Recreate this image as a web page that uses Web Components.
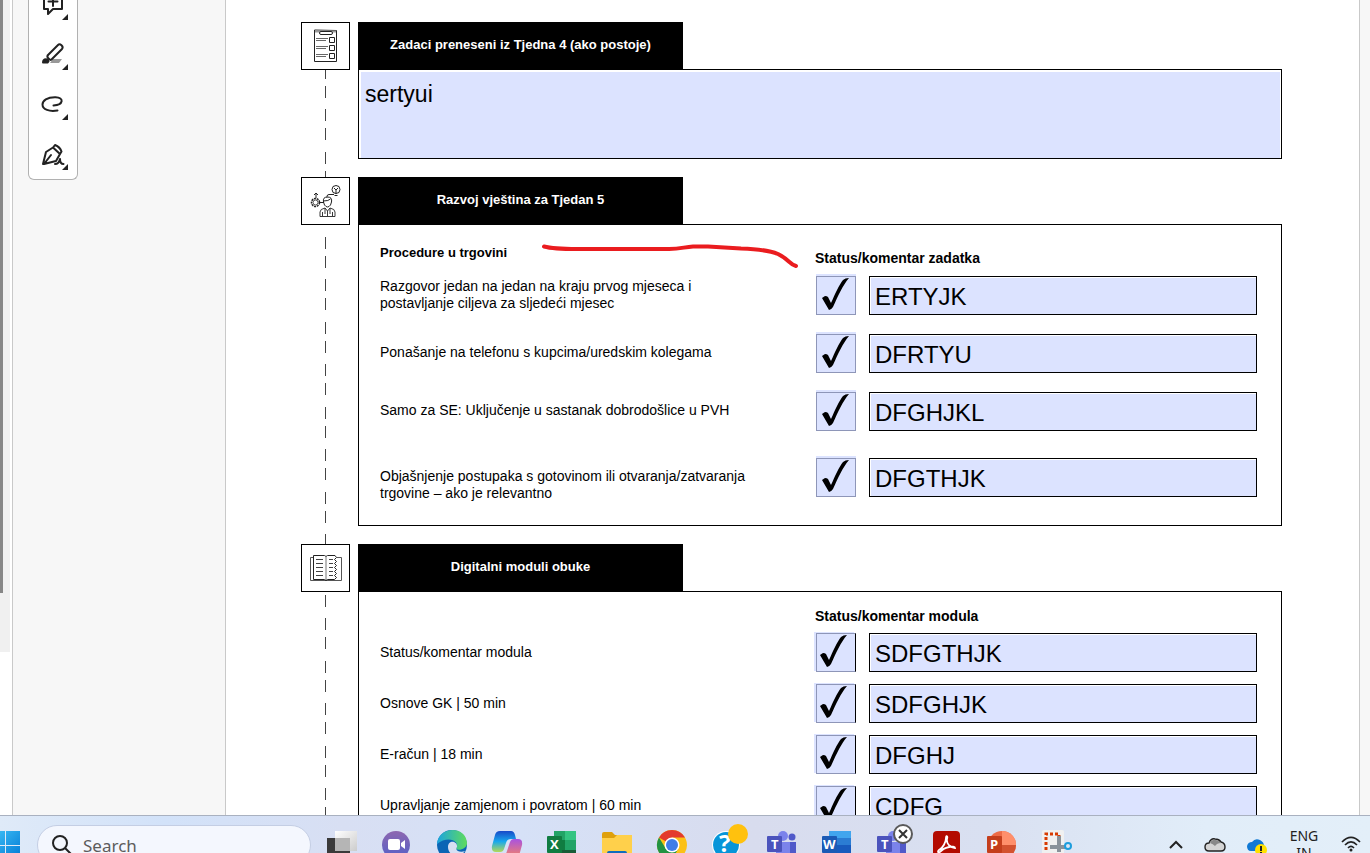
<!DOCTYPE html>
<html lang="hr">
<head>
<meta charset="utf-8">
<title>Plan obuke</title>
<style>
html,body{margin:0;height:100%;overflow:hidden;background:#fff;font-family:"Liberation Sans",Arial,sans-serif;color:#000}
</style>
</head>
<body>
<pdf-desktop>
  <tool-rail slot="tools"></tool-rail>
  <plan-section heading="Zadaci preneseni iz Tjedna 4 (ako postoje)" dash="-3px">
    <svg slot="icon" width="26" height="34" viewBox="0 0 26 34" fill="none" stroke="#222" aria-hidden="true">
      <path d="M1.500 1v31.500h22V1.500z"/><path d="M2 2.500h21" stroke="#999" stroke-width="2"/><rect x="6.500" y="2.500" width="13" height="3" rx="1.500" fill="#fff"/>
      <path d="M3 9.500h12M3 11.500h10M3 17.500h12M3 19.500h10M3 25.500h12M3 27.500h10" stroke="#666"/>
      <path d="M16.500 8.500h5v5h-5zM16.500 16.500h5v5h-5zM16.500 24.500h5v5h-5z"/>
    </svg>
    <note-area value="sertyui" label="Zadaci preneseni iz Tjedna 4"></note-area>
  </plan-section>
  <plan-section heading="Razvoj vještina za Tjedan 5" dash="12px">
    <svg slot="icon" width="34" height="34" viewBox="0 0 34 34" fill="none" stroke="#222" aria-hidden="true">
      <circle cx="6.500" cy="18.500" r="4" stroke-width="1.500" stroke-dasharray="2 .8"/><circle cx="6.500" cy="18.500" r="2.500" stroke-width=".8"/><path d="M7 14v-4M5 11l2-2 2 2M11 18.500h4"/>
      <circle cx="27" cy="5.500" r="4"/><path d="M25 4l2 2 2-2M27 6v4M25.500 11.500h3M25 10.500h-5q-2 0-2 2v1"/>
      <path d="M14.500 18q-1-5 4-5 5 0 4 5l-1 3q-3 4-6 0zM14.500 17q5 0 7-2" /><path d="M16 24q-5 1-5 4v4.500h15V28q0-3-5-4l-2.500 3zM18.500 27v5M16 24v6M21 24v6M13.500 28v4M23.500 28v4" stroke-width=".9"/>
    </svg>
    <task-list class="wide">
      <strong slot="left">Procedure u trgovini</strong>
      <span slot="right">Status/komentar zadatka</span>
      <task-row class="mid" label="Razgovor jedan na jedan na kraju prvog mjeseca i|postavljanje ciljeva za sljedeći mjesec" value="ERTYJK"></task-row>
      <task-row label="Ponašanje na telefonu s kupcima/uredskim kolegama" value="DFRTYU"></task-row>
      <task-row label="Samo za SE: Uključenje u sastanak dobrodošlice u PVH" value="DFGHJKL"></task-row>
      <task-row class="last" label="Objašnjenje postupaka s gotovinom ili otvaranja/zatvaranja|trgovine – ako je relevantno" value="DFGTHJK"></task-row>
    </task-list>
    <ink-stroke></ink-stroke>
  </plan-section>
  <plan-section heading="Digitalni moduli obuke" dash="-16px">
    <svg slot="icon" width="34" height="28" viewBox="0 0 34 28" fill="none" stroke="#222" aria-hidden="true">
      <path d="M4 3.500H1.500v23h31v-23H28" stroke="#555"/><path d="M4.500 1.500h11l1.500 1 1.500-1H26l1.500 2-2 2 2 2-2 2 2 2-2 2 2 2-2 2 2 2-2 2 2 2-2 2h-7l-1.500 1-1.500-1h-11z"/><path d="M17 2v24" stroke="#777"/>
      <path d="M7 5.500h7M7 9.500h7M7 13.500h7M7 17.500h7M7 21.500h7M20 5.500h4M20 9.500h4M20 13.500h4M20 17.500h4M20 21.500h4" stroke="#444"/>
    </svg>
    <task-list class="tight">
      <span slot="right">Status/komentar modula</span>
      <task-row class="edge" label="Status/komentar modula" value="SDFGTHJK"></task-row>
      <task-row class="edge" label="Osnove GK | 50 min" value="SDFGHJK"></task-row>
      <task-row class="edge" label="E-račun | 18 min" value="DFGHJ"></task-row>
      <task-row class="edge" label="Upravljanje zamjenom i povratom | 60 min" value="CDFG"></task-row>
    </task-list>
  </plan-section>
  <task-bar slot="taskbar"></task-bar>
</pdf-desktop>

<script>
class Part extends HTMLElement{
  connectedCallback(){
    if(this.shadowRoot) return;
    const t=document.createElement('template');
    t.innerHTML=`<style>:host,*{box-sizing:border-box}${this.css()}</style>${this.html()}`;
    this.attachShadow({mode:'open'}).append(t.content.cloneNode(true));
  }
  a(n){return this.getAttribute(n)||''}
}
customElements.define('pdf-desktop',class extends Part{
  css(){return `:host{display:flex;flex-direction:column;height:100vh}
  .main{flex:1;min-height:0;display:flex;overflow:hidden}
  .scroll{width:12px;flex:none;display:flex;flex-direction:column}
  .track{height:80%;width:10px;background:#f0f0f0}
  .thumb{height:91%;width:3px;background:#868686}
  aside{width:214px;flex:none;background:#f7f7f7;border:solid #c9c9c9;border-width:0 1px;padding-left:15px}
  .page{flex:1;min-width:0;padding:22px 77px 0 75px;background:#fff}
  .edge{width:11px;flex:none;border-left:1px solid #c9c9c9;background:#f7f7f7}`}
  html(){return `<div class="main"><div class="scroll"><div class="track"><div class="thumb"></div></div></div>
  <aside><slot name="tools"></slot></aside><main class="page"><slot></slot></main><div class="edge"></div></div><slot name="taskbar"></slot>`}
});
customElements.define('tool-rail',class extends Part{
  css(){return `:host{display:flex;flex-direction:column;width:50px;height:180px;background:#fff;border:1px solid #b1b1b1;border-top:0;border-radius:0 0 6px 6px;justify-content:flex-end}
  button{position:relative;height:50px;flex:none;border:0;background:none;padding:0;display:flex;align-items:center;justify-content:center}
  svg{display:block}.m{position:absolute;right:9px;bottom:9px}`}
  html(){
    const i={
      Komentar:'<path d="M4 3h18v15h-9l-5 5v-5H4z"/><path d="M13 6v9M8.500 10.500h9"/>',
      'Istakni':'<path d="M10 22h9l3-4h-9z" fill="#999" stroke="none"/><path d="M7.500 14.500L18 4q1.500-1.500 3.500.3t.5 3.700L11.500 18.500q-1 .8-2.200-.2l-1.500-1.500q-1-1 0-2z"/><path d="M3 21.500q0-3 3-3.200 2 0 2.500 2l-1 1.200z" fill="#222"/>',
      'Crtaj':'<path d="M13.500 14.500c10-.5 11-8 2-8.300C7 6 2.500 10 2.500 13.500c0 5 7 7.500 15 6"/>',
      'Potpis':'<path d="M3 23L6 11l7-4.500 7 6.500-4 7-12 3 7-9M13 6.500L15 4q5 2 6.500 6.500L20 13"/><path d="M15 23q4 0 5-5 0 5 3.500 5"/>'};
    return Object.keys(i).map(k=>`<button aria-label="${k}"><svg width="26" height="26" viewBox="0 0 26 26" fill="none" stroke="#222" stroke-width="2" stroke-linejoin="round" stroke-linecap="round">${i[k]}</svg><svg class="m" width="6" height="6"><path d="M6 0v6H0z" fill="#222"/></svg></button>`).join('')}
});
customElements.define('plan-section',class extends Part{
  css(){return `:host{display:grid;grid-template-columns:49px minmax(0,1fr);column-gap:8px}
  .rail{display:flex;flex-direction:column}
  .icon{height:48px;flex:none;border:1px solid #000;display:flex;align-items:center;justify-content:center}
  .line{flex:1;width:1px;margin-left:24px;background:repeating-linear-gradient(#444 0 12px,#fff 12px 19px,#444 19px 31px,#fff 31px 42px,#444 42px 54px,#fff 54px 61px,#444 61px 73px,#fff 73px 85px) 0 var(--dash)/1px 85px}
  .body{padding-bottom:18px;min-width:0}
  h2{margin:0;width:325px;height:47px;background:#000;color:#fff;font-size:13px;line-height:46px;text-align:center;font-weight:700}
  .panel{position:relative;border:1px solid #000}`}
  html(){return `<div class="rail" style="--dash:${this.a('dash')}"><div class="icon"><slot name="icon"></slot></div><div class="line"></div></div>
  <section class="body"><h2>${this.a('heading')}</h2><div class="panel"><slot></slot></div></section>`}
});
customElements.define('note-area',class extends Part{
  css(){return `:host{display:block;padding:2px 1px 0 2px}
  textarea{display:block;width:100%;height:86px;border:0;resize:none;background:#dce3ff;padding:9px 4px;font:23px/26px "Liberation Sans",Arial,sans-serif;color:#000;outline:0}`}
  html(){return `<textarea aria-label="${this.a('label')}">${this.a('value')}</textarea>`}
});
customElements.define('task-list',class extends Part{
  css(){return `:host{display:flex;flex-direction:column;gap:19px;padding:20px 24px 28px 21px}
  :host(.tight){gap:12px;padding-top:16px}
  header{display:grid;grid-template-columns:minmax(0,1fr) 442px;font-size:13px;line-height:16px;font-weight:700;margin-bottom:-9px}
  :host(.tight) header{margin-bottom:-3px}
  .r{padding-top:5px;font-size:14px}:host(.tight) .r{padding-top:0}`}
  html(){return `<header><div><slot name="left"></slot></div><div class="r"><slot name="right"></slot></div></header><slot></slot>`}
});
let n=0;
customElements.define('task-row',class extends Part{
  css(){return `:host{display:grid;grid-template-columns:minmax(0,1fr) 54px 388px;align-items:start;height:39px;font-size:14px;line-height:17px}
  :host(.last){margin-top:8px}
  label{padding-top:10px}
  :host(.mid) label{padding-top:2px}
  :host(.edge) label{padding-top:11px}
  .c{appearance:none;margin:0 0 0 1px;width:40px;height:39px;border:1px solid #8e96b8;background:#dce3ff;box-shadow:0 -2px 0 #dce3ff}
  :host(.edge) .c{border-right-color:#000;box-shadow:-2px -1px 0 #dce3ff}
  .c:checked::before{content:"";display:block;width:38px;height:38px;background:#000;clip-path:path("M5 21L8 19Q10 19 11 20L14 26C18 17 22 8 26 3Q28 1 32 1C26 8 21 19 16 30Q14 33 12 33Z")}
  :host(.edge) .c:checked::before{clip-path:path("M3 21L6 19Q8 19 9 20L12 26C16 17 20 8 24 3Q26 1 30 1C24 8 19 19 14 30Q12 33 10 33Z")}
  .t{width:388px;height:39px;border:1px solid #000;background:#dce3ff;box-shadow:inset 1px 1px 0 #fff;padding:2px 5px 0;font:24px "Liberation Sans",Arial,sans-serif;color:#000;outline:0}`}
  html(){const id='r'+(++n);return `<label for="${id}">${this.a('label').replace('|',this.a('label').includes(' | ')?'|':'<br>')}</label><input class="c" type="checkbox" id="${id}" checked><input class="t" type="text" aria-label="Komentar" value="${this.a('value')}">`}
});
customElements.define('ink-stroke',class extends Part{
  css(){return `:host{position:absolute;left:182px;top:17px;pointer-events:none}svg{display:block}`}
  html(){return `<svg width="260" height="30" viewBox="0 0 260 30" fill="none" stroke="#ea1c1f" stroke-width="4" stroke-linecap="round"><path d="M3 4.500C12 7 22 7 36 7H128C140 7 143 5 152 4.500H167L200 6.500C217 7 227 8 237 12C249 18 248 22 255 24"/></svg>`}
});
customElements.define('task-bar',class extends Part{
  css(){return `:host{display:block;height:38px;flex:none;overflow:hidden;border-top:1px solid #a9b1c0;background:linear-gradient(90deg,#dfeaf8,#d2e2f9 12%,#d8dff3 25%,#d6e1f7 38%,#d8dcee 55%,#d9e0f1 72%,#e1edf9 88%,#e3eff9)}
  .bar{display:flex;align-items:flex-start;height:48px;padding-top:14px}
  button{border:0;padding:0;background:none;display:block;flex:none;font:inherit;color:#222}
  svg{display:block;overflow:visible}
  .start{width:20px}
  .search{margin:-5px 16px 0 17px;width:274px;height:40px;flex:none;border:1px solid #c4cee4;border-radius:20px;background:#f4f7fe;display:flex;align-items:center;padding:0 14px;gap:13px}
  .search input{width:180px;border:0;background:none;padding:0;outline:0;font:17px "Noto Sans",sans-serif;color:#5c5c5c}
  .search input::placeholder{color:#5c5c5c;opacity:1}
  .apps{display:flex;gap:25px}.apps button{width:30px}
  .tray{margin:-7px 0 0 auto;display:flex;align-items:flex-start;gap:21px;padding-right:9px}
  .lang{font:14px/17px "Noto Sans",sans-serif;width:32px;text-align:center;padding-top:4px}
  text{font-family:"Open Sans",sans-serif;font-weight:700;fill:#fff;font-size:13px}`}
  html(){
    const app=(l,s)=>`<button aria-label="${l}"><svg width="30" height="30" viewBox="0 0 30 30">${s}</svg></button>`;
    const teams='<circle cx="16" cy="6" r="5" fill="#7b83eb"/><circle cx="25" cy="7" r="3.500" fill="#5059c9"/><path d="M20 12h9v12q-4 4-9 1z" fill="#5059c9"/><path d="M9 12h14v12q-6 8-14 1z" fill="#7b83eb"/><rect y="6" width="15" height="16" rx="1" fill="#4b53bc"/><text x="4" y="19">T</text>';
    return `<div class="bar">
    <button class="start" aria-label="Start"><svg width="20" height="32"><defs><linearGradient id="w" x2="1" y2="1"><stop stop-color="#43c4f8"/><stop offset="1" stop-color="#0078d4"/></linearGradient></defs><path d="M-10 1H5v14h-15zM6 1h14v14H6zM-10 16H5v14h-15zM6 16h14v14H6z" fill="url(#w)"/></svg></button>
    <div class="search"><svg width="18" height="20" fill="none" stroke="#222" stroke-width="2"><circle cx="8" cy="8" r="7"/><path d="M13 13l6 6"/></svg><input type="search" placeholder="Search" aria-label="Search"></div>
    <div class="apps">
    ${app('Task view','<defs><linearGradient id="tv" x2="1" y2="1"><stop stop-color="#fff"/><stop offset="1" stop-color="#ccc"/></linearGradient></defs><path d="M0 8h23v20H0z" fill="#3a3a3a"/><path d="M8 1h22v20H8z" fill="url(#tv)"/><path d="M8 8h15v13H8z" fill="#b5b5b5"/>')}
    ${app('Chat','<defs><linearGradient id="ch" x2="0" y2="1"><stop stop-color="#8d67b0"/><stop offset="1" stop-color="#5560c8"/></linearGradient></defs><circle cx="14" cy="15" r="14" fill="url(#ch)"/><rect x="6" y="9" width="12" height="11" rx="2" fill="#fff"/><path d="M19 13l4-3v9l-4-3z" fill="#fff"/>')}
    ${app('Edge','<defs><linearGradient id="e1"><stop stop-color="#1aa3e0"/><stop offset="1" stop-color="#5fdc5c"/></linearGradient></defs><circle cx="15" cy="15" r="15" fill="#0b65b5"/><path d="M0 14C1-4 29-5 30 13c0 6-8 8-11 6 5-8-8-14-19-5z" fill="url(#e1)"/><path d="M11 17c0-8 10-6 9 0-3 4 4 6 8 4-7 9-17 4-17-4z" fill="#d7dff2"/>')}
    ${app('Copilot','<defs><linearGradient id="c1" x2="0" y2="1"><stop stop-color="#1749c8"/><stop offset=".5" stop-color="#18a8ed"/><stop offset="1" stop-color="#b2d957"/></linearGradient><linearGradient id="c2" x2="0" y2="1"><stop stop-color="#a852e0"/><stop offset="1" stop-color="#ff8b56"/></linearGradient></defs><path d="M8 1h11q3 0 4 4l1 4h-5q-4 0-5 4l-2 6q-1 3-4 3H4q-5 0-4-6L3 5q1-4 5-4z" fill="url(#c1)"/><path d="M22 9h4q5 0 4 6l-3 11q-1 4-5 4H11q-4 0-5-5h5q3 0 4-4l3-9q1-3 4-3z" fill="url(#c2)"/>')}
    ${app('Excel','<path d="M7 1h22v28H7z" fill="#21a366"/><path d="M18 1h11v9H18z" fill="#33c481"/><path d="M7 10h11v10H7z" fill="#107c41"/><path d="M18 20h11v9H7v-9z" fill="#185c37"/><rect y="6" width="15" height="17" rx="1" fill="#107c41"/><text x="3" y="19">X</text>')}
    ${app('Files','<path d="M0 4q0-2 2-2h8l3 3h15q2 0 2 2v5H0z" fill="#dfa00c"/><path d="M0 8h12l3-3h15v22H0z" fill="#ffd04b"/><path d="M5 23q0-2 2-2h16q2 0 2 2v6H5z" fill="#0f6cbd"/>')}
    ${app('Chrome','<circle cx="15" cy="15" r="15" fill="#fbc116"/><path d="M15 15L2 7.500A15 15 0 0 1 28 7.500H15z" fill="#e33b2e"/><path d="M2 7.500A15 15 0 0 0 15 30l6-11H9z" fill="#229342"/><circle cx="15" cy="15" r="7.500" fill="#fff"/><circle cx="15" cy="15" r="6" fill="#3f7de8"/>')}
    ${app('Help','<circle cx="14" cy="15" r="14" fill="#fff"/><circle cx="14" cy="15" r="13" fill="#0795d9"/><text x="7" y="22" style="font-size:24px">?</text><circle cx="26" cy="4" r="10" fill="#ffc10e"/>')}
    ${app('Teams',teams)}
    ${app('Word','<path d="M7 1h22v28H7z" fill="#2b7cd3"/><path d="M7 1h22v7H7z" fill="#41a5ee"/><path d="M7 15h22v14H7z" fill="#185abd"/><rect y="6" width="15" height="17" rx="1" fill="#1b5ab5"/><text x="1" y="19">W</text>')}
    ${app('Teams call',teams+'<circle cx="26" cy="4" r="9" fill="#fff" stroke="#5a5a5a" stroke-width="2"/><path d="M22 0l8 8M30 0l-8 8" stroke="#333" stroke-width="2"/>')}
    ${app('Acrobat','<rect x="1" y="1" width="27" height="28" rx="4" fill="#b30b00"/><path d="M7 20c4-2 7-8 7-12 0-3 2-2 1 1-1 5 4 9 8 9 0-3-11-1-15 4-3 1-2-1-1-2z" fill="none" stroke="#fff" stroke-width="1.800"/>')}
    ${app('PowerPoint','<circle cx="15" cy="15" r="14" fill="#ed6c47"/><path d="M15 1a14 14 0 0 1 14 14H15z" fill="#ff8f6b"/><path d="M1 15h28a14 14 0 0 1-28 0z" fill="#d35230"/><rect y="6" width="15" height="17" rx="1" fill="#c43e1c"/><text x="3" y="19">P</text>')}
    ${app('Snipping Tool','<rect y="0" width="22" height="26" rx="2" fill="#f0f0f0"/><path d="M4 20V4h13v8" fill="none" stroke="#d83b01" stroke-width="3" stroke-dasharray="3 2"/><path d="M17 6v16M8 17h15" stroke="#8a929a" stroke-width="4"/><circle cx="26" cy="16" r="3" fill="none" stroke="#1c9ddd" stroke-width="2"/>')}
    </div>
    <div class="tray">
    <button aria-label="Show hidden icons"><svg width="14" height="22" fill="none" stroke="#222" stroke-width="2"><path d="M1 25l6-6 6 6"/></svg></button>
    <button aria-label="Weather"><svg width="22" height="28"><path d="M5 28q-4 0-4-4t4-4q2-5 6-4 4 0 6 3 4 1 4 5t-4 4z" fill="#d4d4d4" stroke="#222" stroke-width="1.400"/><path d="M6 20q2-4 6-3 3 1 5 3-4 0-6 3-2-2-5-3z" fill="#888"/></svg></button>
    <button aria-label="OneDrive"><svg width="20" height="28"><path d="M4 28q-4 0-4-5 1-4 5-4 3-4 8-2 4 2 4 6v5z" fill="#0f78d4"/><circle cx="14" cy="27" r="6" fill="#ffe100"/><path d="M14 23v5M14 29v2" stroke="#222" stroke-width="2"/></svg></button>
    <button class="lang">ENG<br>IN</button>
    <button aria-label="Wi-Fi"><svg width="20" height="28" fill="none" stroke="#222" stroke-width="1.700"><path d="M1 19q9-9 18 0M4 22q6-6 12 0M7 25q3-3 6 0"/><circle cx="10" cy="27" r="1.500" fill="#222" stroke="none"/></svg></button>
    </div></div>`}
});
</script>
</body>
</html>
